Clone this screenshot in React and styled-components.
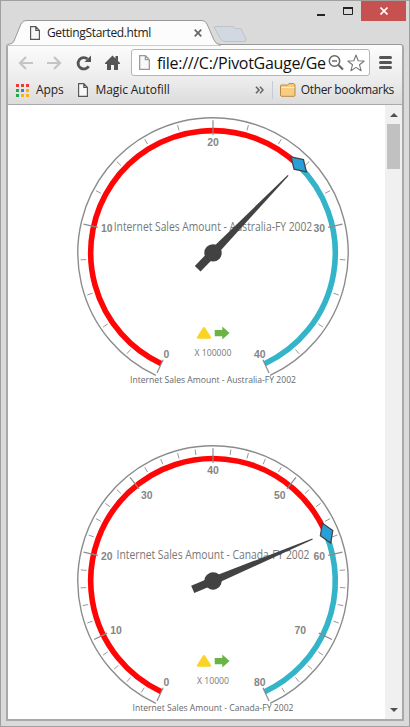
import React from "react";
import styled, { createGlobalStyle } from "styled-components";

const Global = createGlobalStyle`
  *{box-sizing:border-box}
  body{margin:0;background:#dadada;font-family:"Open Sans","Noto Sans",sans-serif;overflow:hidden}
  svg{display:block;flex:none}
`;

const Window = styled.div`
  width:410px;height:727px;display:grid;grid-template-rows:43px 1fr;
  background:#dadada;border:1px solid #a0a0a0;padding:0 5px 5px 5px;position:relative;
`;
const Strip = styled.header`height:43px;display:flex;align-items:flex-end;`;
const TabOutline = styled.svg`position:absolute;left:5px;top:18px;z-index:1;`;
const Tab = styled.div`
  position:relative;z-index:2;width:206px;height:23px;margin-bottom:-1px;padding:0 10px 2px 24px;
  display:flex;align-items:center;
`;
const Label = styled.span`
  white-space:nowrap;font-size:12px;letter-spacing:${p => p.$track || 0}px;
  line-height:16px;color:#222;margin-left:${p => p.$gap || 0}px;margin-right:${p => p.$after || 0}px;
`;
const Spacer = styled.i`flex:1`;
const Controls = styled.div`position:absolute;top:0;right:3px;height:20px;display:flex;`;
const ControlButton = styled.div`
  width:${p => p.$w || 27}px;height:20px;display:flex;align-items:center;justify-content:center;
  background:${p => p.$close ? "#c75050" : "transparent"};
`;
const Browser = styled.main`
  border:2px solid #a9a9a9;border-top:1px solid #999;border-radius:4px 4px 0 0;background:#fff;display:grid;
  grid-template-rows:35px 25px 1fr;width:398px;min-height:0;
`;
const Toolbar = styled.div`
  display:flex;align-items:center;padding:0 10px;background:linear-gradient(#fcfcfc,#ececec);border-radius:3px 3px 0 0;
`;
const NavIcon = styled.div`width:${p => p.$w || 29}px;height:20px;`;
const Omnibox = styled.div`
  width:239px;height:27px;border:1px solid #b5b5b5;border-radius:3px;background:#fff;
  display:flex;align-items:center;padding:0 4px 0 7px;margin-right:9px;
`;
const Url = styled.div`
  width:171px;margin:0 0 0 7px;white-space:nowrap;font-size:16px;letter-spacing:-.3px;color:#111;line-height:22px;
`;
const Bookmarks = styled.div`
  display:flex;align-items:center;padding:0 8px 4px;background:linear-gradient(#ececec,#dcdcdc);border-bottom:1px solid #aaa;
`;
const AppsGrid = styled.div`display:grid;grid-template-columns:repeat(3,3px);grid-auto-rows:3px;gap:2px;`;
const AppDot = styled.i`background:${p => p.$c};`;
const Divider = styled.i`width:1px;height:18px;background:#c3ccd6;margin:0 7px 0 8px;`;
const Page = styled.section`display:grid;grid-template-columns:1fr 17px;min-height:0;overflow:hidden;`;
const Gauges = styled.div`display:grid;grid-template-rows:328px 286px;height:614px;overflow:hidden;`;
const Scrollbar = styled.div`
  background:#f0f0f0;display:flex;flex-direction:column;align-items:center;height:614px;
`;
const Thumb = styled.div`width:13px;height:45px;background:#c1c1c1;`;
const ArrowBox = styled.div`height:19px;display:flex;align-items:center;`;

const PageIcon = ({ w = 10, h = 14, c = "#555" }) => (
  <svg width={w} height={h} viewBox="0 0 10 14" preserveAspectRatio="none"><path d="M.6.6H5.8L9.4 4.4V13.4H.6ZM5.8.6V4.4H9.4" fill="#f8f8f8" stroke={c} strokeWidth="1.15" /></svg>
);

const rad = a => a * Math.PI / 180;
const CX = 205, CY = 147.9;
const at = (r, a) => [CX + r * Math.cos(rad(a)), CY + r * Math.sin(rad(a))];
const arc = (r, a, b) => {
  const [x1, y1] = at(r, a), [x2, y2] = at(r, b);
  return `M${x1} ${y1}A${r} ${r} 0 ${b - a > 180 ? 1 : 0} 1 ${x2} ${y2}`;
};
const START = 115, SWEEP = 310;
const angle = (v, max) => START + v / max * SWEEP;

const Caption = ({ y, size, width, color, children }) => (
  <text x={CX} y={y} textAnchor="middle" fontSize={size} textLength={width} lengthAdjust="spacingAndGlyphs" fill={color}>{children}</text>
);

function Gauge({ max, sweep, title, scale, titleWidth, scaleWidth, footWidth, labels }) {
  const va = START + sweep;
  const ticks = [];
  for (let v = 0; v <= max; v += 2) {
    const major = v % 10 === 0, a = angle(v, max);
    const [x1, y1] = at(132.6, a), [x2, y2] = at(major ? 118 : 127, a);
    ticks.push(<line key={v} x1={x1} y1={y1} x2={x2} y2={y2} stroke={major ? "#8c8c8c" : "#999"} strokeWidth={major ? 1.2 : 1} />);
  }
  const [mx, my] = at(123.2, va);
  return (
    <svg width="377" height="328" viewBox="0 0 377 328" fontFamily='"Open Sans","Noto Sans",sans-serif'>
      <path d={arc(135.2, START, START + SWEEP)} fill="none" stroke="#8c8c8c" strokeWidth="1.4" />
      <path d={arc(122.3, START, va)} fill="none" stroke="#ff0505" strokeWidth="5.6" />
      <path d={arc(122.3, va, START + SWEEP)} fill="none" stroke="#33b4c8" strokeWidth="5.6" />
      {ticks}
      {labels.map(([n, x, y]) => (
        <text key={n} x={x} y={y} textAnchor="middle" fontFamily='"Liberation Sans",Arial,sans-serif' fontWeight="700" fontSize="10.4" fill="#858585">{n}</text>
      ))}
      <Caption y="125.8" size="11.7" width={titleWidth} color="#777">{title}</Caption>
      <g transform={`translate(${mx} ${my}) rotate(${va})`}>
        <path d="M0-10.7L6.7 0L0 10.7L-6.7 0Z" fill="#289fd8" stroke="#444" strokeWidth="1.3" />
      </g>
      <g transform={`translate(${CX} ${CY}) rotate(${va})`} fill="#424242">
        <path d="M-22-4H0L108-.6V.6L0 4H-22Z" />
        <circle r="8.7" />
      </g>
      <path d="M195 222.4Q196 221.4 197 222.4L203 232Q203.6 233.8 202 233.8H190Q188.4 233.8 189 232Z" fill="#fad425" />
      <path d="M206.7 224.9H214.3V221.5L221.5 228L214.3 234.5V231.3H206.7Z" fill="#6ab445" />
      <Caption y="250.7" size="9" width={scaleWidth} color="#777">{scale}</Caption>
      <Caption y="277.8" size="9" width={footWidth} color="#686868">{title}</Caption>
    </svg>
  );
}

const DOTS = ["#ee3a36", "#ee3a36", "#ee3a36", "#2ba350", "#1b86f2", "#fbb313", "#2ba350", "#fbb313", "#fbb313"];

export default function App() {
  return (
    <>
      <Global />
      <Window>
        <TabOutline width="245" height="27" viewBox="0 0 245 27">
          <path d="M0 27Q1 25 4 25Q7 24.5 8 22L15 5Q16.5 1.5 20 1.5H196Q199.5 1.5 201 5L208 21Q210 25.5 214 25.5V27Z" fill="#fcfcfc" stroke="#999" />
          <path d="M210 7.5H226Q228 7.5 229 9.5H235L240 20.5Q240.5 22.5 238 22.500H219Q216 22.500 215 20.500L208.500 9Q208 7.500 210 7.500Z" fill="#d2d8e1" stroke="#c0c2c6" />
        </TabOutline>
        <Strip>
          <Tab>
            <PageIcon />
            <Label $gap={7} $track={-.35}>GettingStarted.html</Label>
            <Spacer />
            <svg width="8" height="8"><path d="M.7.7L7.3 7.3M7.3.7L.7 7.3" stroke="#666" strokeWidth="1.7" /></svg>
          </Tab>
          <Controls>
            <ControlButton><svg width="8" height="9"><path d="M0 8H8" stroke="#222" strokeWidth="2" /></svg></ControlButton>
            <ControlButton><svg width="10" height="8"><path d="M.5 1H9.5V7.5H.5Z" fill="none" stroke="#222" /><path d="M0 1H10" stroke="#222" strokeWidth="2" /></svg></ControlButton>
            <ControlButton $w={45} $close><svg width="8" height="8"><path d="M.5.5L7.5 7.5M7.5.5L.5 7.5" stroke="#fff" strokeWidth="1.6" /></svg></ControlButton>
          </Controls>
        </Strip>
        <Browser>
          <Toolbar>
            <NavIcon><svg width="16" height="20"><path d="M15 10H2M8 4L2 10L8 16" fill="none" stroke="#c4c4c4" strokeWidth="2.2" /></svg></NavIcon>
            <NavIcon><svg width="16" height="20"><path d="M0 10H13M7 4L13 10L7 16" fill="none" stroke="#c4c4c4" strokeWidth="2.2" /></svg></NavIcon>
            <NavIcon><svg width="16" height="20"><path d="M12.7 13.2A5.7 5.7 0 1 1 11.5 5.9" fill="none" stroke="#555" strokeWidth="2.8" /><path d="M15 2.5V9H8.5Z" fill="#555" /></svg></NavIcon>
            <NavIcon $w={26}><svg width="16" height="20"><path d="M0 10L7.5 2.5L10.5 5.5V3H13V8L15 10V11H13V17H9V12H6V17H2V11H0Z" fill="#555" /></svg></NavIcon>
            <Omnibox>
              <PageIcon w={11} h={15} c="#999" />
              <Url>file:///C:/PivotGauge/Ge</Url>
              <svg width="16" height="17" viewBox="0 0 16 17" fill="none" stroke="#666"><circle cx="6.5" cy="7" r="5.2" strokeWidth="1.5" /><path d="M4 7H9" strokeWidth="1.4" /><path d="M10.5 11L15 15.5" strokeWidth="2.2" /></svg>
              <Spacer />
              <svg width="18" height="18" viewBox="0 0 18 18"><path d="M9 1L11.2 6.7L17.2 7L12.5 10.8L14.1 16.7L9 13.4L3.9 16.7L5.5 10.8L.8 7L6.8 6.7Z" fill="#fff" stroke="#777" strokeWidth="1.1" strokeLinejoin="round" /></svg>
            </Omnibox>
            <svg width="13" height="13"><path d="M1.5 1.5H11.5M1.5 6.5H11.5M1.5 11.5H11.5" stroke="#555" strokeWidth="3" strokeLinecap="round" /></svg>
          </Toolbar>
          <Bookmarks>
            <AppsGrid>{DOTS.map((c, i) => <AppDot key={i} $c={c} />)}</AppsGrid>
            <Label $gap={7} $after={14} $track={-.1}>Apps</Label>
            <PageIcon />
            <Label $gap={8} $track={-.1}>Magic Autofill</Label>
            <Spacer />
            <svg width="9" height="8"><path d="M1 .8L4 4L1 7.2M5 .8L8 4L5 7.2" fill="none" stroke="#666" strokeWidth="1.6" /></svg>
            <Divider />
            <svg width="16" height="14" viewBox="0 0 16 14"><path d="M.5 12V3Q.5 2 1.5 2H7.5L9 .6H14L15 2V12Q15 13.3 14 13.3H2Q.5 13.3 .5 12Z" fill="#f8cc82" stroke="#b98a46" /><path d="M1.5 4.5H14.5" stroke="#fdecc8" /></svg>
            <Label $gap={5} $track={-.35}>Other bookmarks</Label>
          </Bookmarks>
          <Page>
            <Gauges>
              <Gauge max={40} sweep={199.1} title="Internet Sales Amount - Australia-FY 2002" scale="X 100000" titleWidth={198.5} scaleWidth={37} footWidth={166}
                labels={[[0, 158.3, 252.7], [10, 98.8, 127.4], [20, 205, 41.4], [30, 311.3, 127.4], [40, 251.7, 252.7]]} />
              <Gauge max={80} sweep={222.2} title="Internet Sales Amount - Canada-FY 2002" scale="X 10000" titleWidth={193} scaleWidth={32} footWidth={161}
                labels={[[0, 158.3, 252.7], [10, 108, 201.4], [20, 98.8, 127.4], [30, 138.7, 65.5], [40, 205, 41.4], [50, 271.7, 65.5], [60, 311.3, 127.4], [70, 292.3, 201.4], [80, 251.7, 252.7]]} />
            </Gauges>
            <Scrollbar>
              <ArrowBox><svg width="8" height="4"><path d="M0 4L4 0L8 4Z" fill="#505050" /></svg></ArrowBox>
              <Thumb />
              <Spacer />
              <ArrowBox><svg width="8" height="4"><path d="M0 0L4 4L8 0Z" fill="#505050" /></svg></ArrowBox>
            </Scrollbar>
          </Page>
        </Browser>
      </Window>
    </>
  );
}
